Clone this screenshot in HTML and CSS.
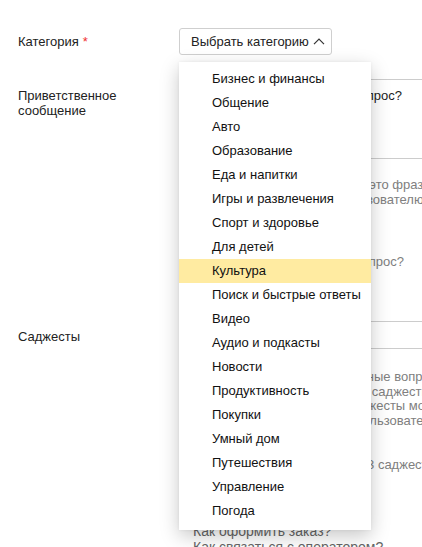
FILE: index.html
```html
<!DOCTYPE html>
<html lang="ru">
<head>
<meta charset="utf-8">
<title>Категория</title>
<link rel="stylesheet" href="styles.css">
</head>
<body>
<div class="page">
  <div class="form">
    <div class="row row-category">
      <div class="label">Категория <span class="req">*</span></div>
      <div class="field">
        <div class="select-wrap">
          <button class="select-btn" type="button">
            <span>Выбрать категорию</span>
            <svg class="chevron" width="12" height="7" viewBox="0 0 12 7"><path d="M1 6.2 L6 1.2 L11 6.2" fill="none" stroke="#333" stroke-width="1.2"/></svg>
          </button>
          <ul class="menu">
            <li>Бизнес и финансы</li>
            <li>Общение</li>
            <li>Авто</li>
            <li>Образование</li>
            <li>Еда и напитки</li>
            <li>Игры и развлечения</li>
            <li>Спорт и здоровье</li>
            <li>Для детей</li>
            <li class="active">Культура</li>
            <li>Поиск и быстрые ответы</li>
            <li>Видео</li>
            <li>Аудио и подкасты</li>
            <li>Новости</li>
            <li>Продуктивность</li>
            <li>Покупки</li>
            <li>Умный дом</li>
            <li>Путешествия</li>
            <li>Управление</li>
            <li>Погода</li>
          </ul>
        </div>
      </div>
    </div>

    <div class="row row-greeting">
      <div class="label label-top">Приветственное<br>сообщение</div>
      <div class="field">
        <div class="textarea">Здравствуйте! Какой у вас вопрос?</div>
        <div class="hint hint-greet">Приветственное сообщение — это фраза, которую<br>навык скажет при запуске пользователю</div>
        <div class="hint example">Здравствуйте! Какой у вас вопрос?</div>
      </div>
    </div>

    <div class="row row-suggest">
      <div class="label label-suggest">Саджесты</div>
      <div class="field">
        <div class="input"></div>
        <div class="hint hint-suggest">Саджесты — это подсказки, умные вопросы<br>пользователю. Нажимая на эти саджесты,<br>вы быстро получите ответ. Саджесты можно<br>использовать, чтобы помочь пользователю</div>
        <div class="hint hint-limit">Можно добавлять не более до 3 саджестов</div>
        <div class="suggest-list">
          <div class="suggest-item">Как оформить заказ?</div>
          <div class="suggest-item">Как связаться с оператором?</div>
        </div>
      </div>
    </div>
  </div>
</div>
</body>
</html>
```

FILE: styles.css
```css
html, body {
  margin: 0;
  padding: 0;
  background: #fff;
}
body {
  font-family: "Liberation Sans", Arial, sans-serif;
  font-size: 13px;
  line-height: 15px;
  color: #222;
  overflow: hidden;
  width: 422px;
  height: 547px;
}
.page {
  padding: 28px 0 0 18px;
}
.form {
  width: 640px;
  display: flex;
  flex-direction: column;
}
.row {
  display: grid;
  grid-template-columns: 161px 1fr;
}
.label {
  color: #222;
}
.row-category .label {
  display: flex;
  align-items: center;
  height: 27px;
  gap: 4px;
}
.req {
  color: #f03030;
}
.select-wrap {
  position: relative;
  display: inline-block;
}
.select-btn {
  display: flex;
  align-items: center;
  gap: 4px;
  height: 27px;
  box-sizing: border-box;
  padding: 0 6px 0 11px;
  border: 1px solid #cfcfcf;
  border-radius: 3px;
  background: #fff;
  font-family: inherit;
  font-size: 13px;
  color: #222;
  margin: 0;
}
.chevron {
  display: block;
  margin-top: -1px;
}
.menu {
  position: absolute;
  z-index: 10;
  left: 0;
  top: 34px;
  width: 192px;
  margin: 0;
  padding: 5px 0 7px;
  list-style: none;
  background: #fff;
  box-shadow: 0 6px 18px rgba(0, 0, 0, 0.22), 0 0 3px rgba(0, 0, 0, 0.06);
}
.menu li {
  height: 24px;
  line-height: 24px;
  padding-left: 33px;
  color: #111;
  white-space: nowrap;
}
.menu li.active {
  background: #ffeba1;
}
.row-greeting {
  margin-top: 24px;
}
.label-top {
  padding-top: 9px;
}
.textarea {
  box-sizing: border-box;
  height: 80px;
  border-top: 1px solid #cccccc;
  border-bottom: 1px solid #cccccc;
  border-left: 1px solid #bbbbbb;
  padding: 8px 10px;
  color: #222;
  white-space: nowrap;
}
.hint {
  color: #808080;
  white-space: nowrap;
}
.hint-greet {
  margin-top: 18px;
}
.example {
  margin-top: 47px;
  padding-left: 13px;
}
.row-suggest {
  margin-top: 52px;
}
.label-suggest {
  padding-top: 8px;
}
.input {
  box-sizing: border-box;
  height: 28px;
  border-top: 1px solid #cccccc;
  border-bottom: 1px solid #cccccc;
}
.hint-suggest {
  margin-top: 21px;
  line-height: 14.7px;
}
.hint-limit {
  margin-top: 28px;
}
.suggest-list {
  margin-top: 51px;
  padding-left: 14px;
}
.suggest-item {
  font-size: 14px;
  line-height: 16px;
  color: #666;
}
```
